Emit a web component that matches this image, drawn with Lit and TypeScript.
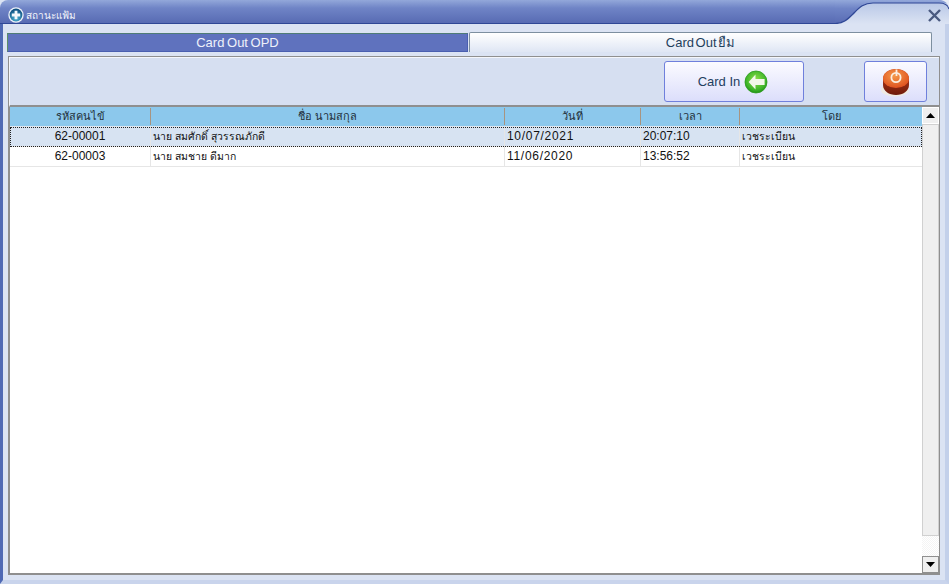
import { LitElement, html, css, svg } from 'lit';
import { customElement } from 'lit/decorators.js';

interface Row {
  hn: string;
  name: string;
  date: string;
  time: string;
  by: string;
  selected?: boolean;
}

const ROWS: Row[] = [
  { hn: '62-00001', name: 'นาย สมศักดิ์ สุวรรณภักดี', date: '10/07/2021', time: '20:07:10', by: 'เวชระเบียน', selected: true },
  { hn: '62-00003', name: 'นาย สมชาย ดีมาก', date: '11/06/2020', time: '13:56:52', by: 'เวชระเบียน' },
];

const capIcon = svg`
  <defs>
    <linearGradient id="capBlue" gradientUnits="userSpaceOnUse" x1="0" y1="0" x2="0" y2="24">
      <stop offset="0" stop-color="#93a8da" />
      <stop offset="0.35" stop-color="#6f84c6" />
      <stop offset="1" stop-color="#586bb3" />
    </linearGradient>
    <linearGradient id="capLight" x1="0" y1="0" x2="0" y2="1">
      <stop offset="0" stop-color="#b4c4e5" />
      <stop offset="1" stop-color="#dbe3f3" />
    </linearGradient>
  </defs>
  <rect width="114" height="24" fill="url(#capLight)" />
  <path d="M0 0 H114 V3 H38 C28 3 24 8 18 14 C12 20 8 23.5 0 23.5 Z" fill="url(#capBlue)" />
  <path d="M0 23.5 C8 23.5 12 20 18 14 C24 8 28 3 38 3 H104 C109 3 113 5 114 9" fill="none" stroke="#2f4796" stroke-width="1.2" />
  <path d="M106 0 H114 V8 C113 3 110 1 106 0 Z" fill="#e8ecf5" />
  <path d="M94 10 L105 21 M105 10 L94 21" stroke="#4a5a80" stroke-width="2.4" />
`;

const plusIcon = html`
  <svg width="16" height="16" viewBox="0 0 16 16">
    <defs>
      <radialGradient id="plusBall" cx="0.5" cy="0.75" r="0.7">
        <stop offset="0" stop-color="#4fb6d6" />
        <stop offset="1" stop-color="#0d4f80" />
      </radialGradient>
    </defs>
    <circle cx="8" cy="8" r="7.7" fill="#eef3fa" />
    <circle cx="8" cy="8" r="6.4" fill="url(#plusBall)" />
    <path d="M6.6 3.8 H9.4 V6.6 H12.2 V9.4 H9.4 V12.2 H6.6 V9.4 H3.8 V6.6 H6.6 Z" fill="#f4f8fb" />
  </svg>
`;

const arrowIcon = html`
  <svg width="24" height="24" viewBox="0 0 24 24">
    <defs>
      <radialGradient id="arrowBall" cx="0.5" cy="0.4" r="0.65">
        <stop offset="0" stop-color="#8fe04a" />
        <stop offset="0.7" stop-color="#3fb52a" />
        <stop offset="1" stop-color="#17860f" />
      </radialGradient>
    </defs>
    <circle cx="12" cy="12" r="11" fill="url(#arrowBall)" stroke="#2b9a1d" stroke-width="0.8" />
    <path d="M11.5 4.5 L4.6 12 L11.5 19.5 V15 H20.6 V9 H11.5 Z" fill="#f2f7ea" />
  </svg>
`;

const powerIcon = html`
  <svg width="30" height="30" viewBox="0 0 30 30">
    <defs>
      <radialGradient id="powerTop" cx="0.45" cy="0.35" r="0.7">
        <stop offset="0" stop-color="#f59a4a" />
        <stop offset="1" stop-color="#dd4c1c" />
      </radialGradient>
      <linearGradient id="powerSide" x1="0" y1="0" x2="0" y2="1">
        <stop offset="0" stop-color="#c8401a" />
        <stop offset="1" stop-color="#6e1a0b" />
      </linearGradient>
    </defs>
    <ellipse cx="14" cy="23" rx="14" ry="6.5" fill="#efeae3" />
    <path d="M2 12 C2 6 8 2 15 2 C22 2 28 6 28 12 V18 C28 24 22 28 15 28 C8 28 2 24 2 18 Z" fill="url(#powerSide)" />
    <ellipse cx="15" cy="11.5" rx="13" ry="9.5" fill="url(#powerTop)" />
    <circle cx="15" cy="10.5" r="4.6" fill="none" stroke="#fbeee0" stroke-width="1.8" />
    <path d="M15.5 2.5 V9" stroke="#fbeee0" stroke-width="1.8" />
  </svg>
`;

@customElement('app-root')
export class AppRoot extends LitElement {
  static styles = css`
    :host {
      display: flex;
      flex-direction: column;
      width: 949px;
      height: 584px;
      overflow: hidden;
      font-family: 'Liberation Sans', 'Noto Sans', sans-serif;
      font-size: 12px;
      color: #111;
      background: #dbe3f3;
    }
    .titlebar {
      display: flex;
      height: 24px;
      flex: none;
    }
    .title-main {
      flex: 1;
      display: flex;
      align-items: center;
      gap: 2px;
      padding: 6px 0 0 8px;
      border-radius: 8px 0 0 0;
      border-bottom: 1px solid #2f4796;
      box-sizing: border-box;
      background: linear-gradient(#93a8da, #6f84c6 35%, #586bb3);
      color: #f2f5fb;
      font-size: 10px;
    }
    .title-main svg {
      flex: none;
    }
    .title-main span {
      margin-top: 1px;
    }
    .cap {
      display: block;
      flex: none;
    }
    .frame {
      flex: 1;
      min-height: 0;
      display: flex;
      flex-direction: column;
      border-left: 3px solid #4f69b4;
      border-right: 4px solid #c3d0ea;
      border-bottom: 4px solid #c9d4ec;
      padding: 9px 5px 5px 4px;
      background: #dbe3f3;
    }
    .tabs {
      display: flex;
      align-items: flex-start;
      height: 20px;
      flex: none;
      margin-right: 8px;
    }
    .tab {
      display: flex;
      align-items: center;
      justify-content: center;
      box-sizing: border-box;
      font-size: 13px;
    }
    .tab.active {
      width: 461px;
      height: 19px;
      word-spacing: -1px;
      background: #5f72be;
      border: 1px solid #4a5fb0;
      border-top-color: #4f7c76;
      border-left-color: #5d8f6a;
      color: #eef1fa;
    }
    .tab.idle {
      flex: 1;
      height: 20px;
      margin: -1px 0 0 1px;
      word-spacing: -2px;
      background: linear-gradient(#ffffff, #dfe6f4);
      border: 1px solid #7d8fa0;
      border-bottom: none;
      border-radius: 2px 2px 0 0;
      color: #1f3f5c;
    }
    .content {
      flex: 1;
      min-height: 0;
      display: flex;
      flex-direction: column;
      margin: 3px 0 0 1px;
      border: 1px solid #8f8f8f;
      border-bottom: none;
    }
    .toolbar {
      display: flex;
      align-items: center;
      justify-content: flex-end;
      gap: 60px;
      height: 47px;
      flex: none;
      padding: 0 12px 0 0;
      background: #d6dff1;
      border-top: 1px solid #f4f6fb;
      border-left: 1px solid #f4f6fb;
      border-bottom: 2px solid #8f8f8f;
    }
    .btn {
      display: flex;
      align-items: center;
      justify-content: center;
      height: 41px;
      box-sizing: border-box;
      border: 1px solid #6f80dc;
      border-radius: 3px;
      background: linear-gradient(#fbfbff, #dcdefb);
      color: #1f4060;
      font-family: inherit;
      font-size: 13px;
      padding: 0;
    }
    .btn.card {
      width: 140px;
      gap: 4px;
      padding-right: 2px;
    }
    .btn.stop {
      width: 63px;
    }
    .grid-wrap {
      flex: 1;
      min-height: 0;
      display: flex;
      background: #fff;
      border-left: 1px solid #8f8f8f;
      border-bottom: 2px solid #8f8f8f;
    }
    .grid {
      flex: 1;
      min-width: 0;
    }
    .row {
      display: grid;
      grid-template-columns: 141px 354px 136px 99px 1fr;
      box-sizing: border-box;
    }
    .head {
      height: 20px;
      background: #8cc8ec;
      border-bottom: 1px solid #dfe6ee;
      align-items: center;
    }
    .head .cell {
      text-align: center;
      border-right: 1px solid #a89480;
      height: 17px;
      line-height: 17px;
      font-size: 11px;
      color: #22303a;
    }
    .head .cell:last-child {
      border-right: none;
    }
    .body-row {
      height: 20px;
      background: #fff;
      border-bottom: 1px solid #e6e6e6;
    }
    .body-row.selected {
      background: #d7e3f2;
      outline: 1px dotted #222;
      outline-offset: -1px;
    }
    .body-row .cell {
      line-height: 19px;
      padding-left: 2px;
      border-right: 1px solid #e6e6e6;
      white-space: nowrap;
      overflow: hidden;
    }
    .body-row .cell:last-child {
      border-right: none;
    }
    .cell.num {
      text-align: center;
      padding-left: 0;
    }
    .cell.thai {
      font-size: 10.4px;
    }
    .cell.date {
      letter-spacing: 0.7px;
    }
    .scroll {
      width: 17px;
      flex: none;
      display: flex;
      flex-direction: column;
      background: repeating-conic-gradient(#f4f4f4 0 25%, #fff 0 50%) 0 0 / 2px 2px;
    }
    .arrow {
      height: 17px;
      flex: none;
      display: flex;
      align-items: center;
      justify-content: center;
      box-sizing: border-box;
      background: #efefef;
      border: 1px solid #8f8f8f;
    }
    .arrow.plain {
      border-color: #fff;
    }
    .thumb {
      height: 412px;
      flex: none;
      box-sizing: border-box;
      background: #efefef;
      border: 1px solid #d0d0d0;
    }
    .track {
      flex: 1;
    }
  `;

  render() {
    return html`
      <div class="titlebar">
        <div class="title-main">${plusIcon}<span>สถานะแฟ้ม</span></div>
        <svg class="cap" width="114" height="24" viewBox="0 0 114 24">${capIcon}</svg>
      </div>
      <div class="frame">
        <div class="tabs">
          <div class="tab active">Card Out OPD</div>
          <div class="tab idle">Card Out ยืม</div>
        </div>
        <div class="content">
          <div class="toolbar">
            <button class="btn card">Card In ${arrowIcon}</button>
            <button class="btn stop">${powerIcon}</button>
          </div>
          <div class="grid-wrap">
            <div class="grid">
              <div class="row head">
                <div class="cell">รหัสคนไข้</div>
                <div class="cell">ชื่อ นามสกุล</div>
                <div class="cell">วันที่</div>
                <div class="cell">เวลา</div>
                <div class="cell">โดย</div>
              </div>
              ${ROWS.map(
                (r) => html`
                  <div class="row body-row ${r.selected ? 'selected' : ''}">
                    <div class="cell num">${r.hn}</div>
                    <div class="cell thai">${r.name}</div>
                    <div class="cell date">${r.date}</div>
                    <div class="cell">${r.time}</div>
                    <div class="cell thai">${r.by}</div>
                  </div>
                `,
              )}
            </div>
            <div class="scroll">
              <div class="arrow plain">
                <svg width="9" height="5" viewBox="0 0 9 5"><path d="M4.5 0 L9 5 H0 Z" fill="#000" /></svg>
              </div>
              <div class="thumb"></div>
              <div class="track"></div>
              <div class="arrow">
                <svg width="9" height="5" viewBox="0 0 9 5"><path d="M0 0 H9 L4.5 5 Z" fill="#000" /></svg>
              </div>
            </div>
          </div>
        </div>
      </div>
    `;
  }
}
